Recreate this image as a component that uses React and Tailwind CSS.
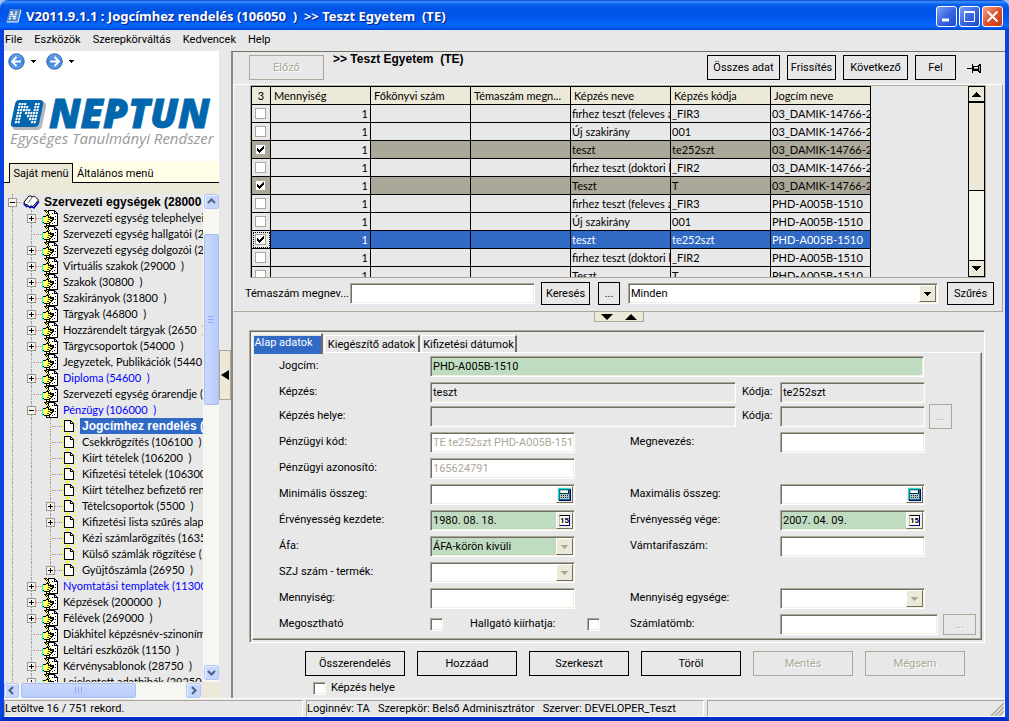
import React from 'react';

const bevel =
  'border border-t-[#aca899] border-l-[#aca899] border-b-white border-r-white shadow-[inset_1px_1px_0_#716f64,inset_-1px_-1px_0_#f1efe2] rounded-none outline-none';

function TextField({ id, label, value = '', tone = 'white', className = '' }) {
  const tones = {
    white: 'bg-white text-black',
    faded: 'bg-white text-[#aca899]',
    green: 'bg-[#c0dcc0] text-black',
    gray: 'bg-[#e8e8e8] text-black',
  };
  return (
    <input
      id={id}
      aria-label={label}
      type="text"
      defaultValue={value}
      className={`h-[21px] min-w-0 px-0.5 ${bevel} ${tones[tone]} ${className}`}
    />
  );
}

function AddonField({ id, value = '', tone, children, buttonLabel }) {
  return (
    <div className="relative h-[21px] w-[145px]">
      <TextField id={id} value={value} tone={tone} className="w-full pr-5" />
      <button
        aria-label={buttonLabel}
        className="absolute top-0.5 right-0.5 flex h-[17px] w-[17px] items-center justify-center border border-t-white border-l-white border-r-[#716f64] border-b-[#716f64] bg-[#f1efe2]"
      >
        {children}
      </button>
    </div>
  );
}

function SelectField({ id, label, value = '', tone = 'white', faded = true, className = '' }) {
  const bg = tone === 'green' ? 'bg-[#c0dcc0]' : 'bg-white';
  return (
    <div className={`relative h-[21px] ${className}`}>
      <select id={id} aria-label={label} defaultValue={value} className={`block h-full w-full appearance-none px-0.5 ${bevel} ${bg}`}>
        <option>{value}</option>
      </select>
      <span className="pointer-events-none absolute top-0.5 right-0.5 flex h-[17px] w-[17px] items-center justify-center border border-t-white border-l-white border-r-[#716f64] border-b-[#716f64] bg-[#ece9d8]">
        <svg width="7" height="4" viewBox="0 0 7 4" shapeRendering="crispEdges">
          <path d="M0 0h7v1H6v1H5v1H4v1H3V3H2V2H1V1H0z" fill={faded ? '#aca899' : '#000'} />
        </svg>
      </span>
    </div>
  );
}

function Calculator() {
  return (
    <svg width="13" height="13" viewBox="0 0 13 13" shapeRendering="crispEdges" className="shrink-0">
      <path d="M1 1h12v12H1z" fill="#000080" />
      <path d="M0 0h12v12H0z" fill="#008080" />
      <path d="M0 0h12v1H1v10H0z" fill="#30d5d5" />
      <path d="M2 2h9v9H2z" fill="#c0c0c0" />
      <path d="M3 3h7v2H3z" fill="#fff" />
      <path d="M2 5h9v1H2zM3 7h1v1H3zM5 7h1v1H5zM7 7h1v1H7zM9 7h1v1H9zM3 9h1v1H3zM5 9h1v1H5zM7 9h1v1H7zM9 9h1v1H9zM10 2h1v3h-1z" fill="#003050" />
    </svg>
  );
}

function CalendarDay() {
  return (
    <span className="flex h-[11px] w-[11px] shrink-0 items-center justify-center border border-t-black border-l-[#c0c0c0] border-r-[#000080] border-b-[#000080] bg-white text-[8px] leading-none font-bold">
      15
    </span>
  );
}

function TickBox({ id, label, checked, size = 'form' }) {
  const skin =
    size === 'grid' ? 'h-[11px] w-[11px] border border-[#aca899] bg-white' : `h-[13px] w-[13px] bg-white ${bevel}`;
  return (
    <span className="relative inline-flex">
      <input id={id} aria-label={label} type="checkbox" defaultChecked={checked} className={`peer appearance-none ${skin}`} />
      <svg
        className="pointer-events-none absolute inset-0 m-auto hidden peer-checked:block"
        width="7"
        height="7"
        viewBox="0 0 7 7"
        shapeRendering="crispEdges"
      >
        <path d="M0 2h1v1h1v1h1V3h1V2h1V1h1V0h1v3H6v1H5v1H4v1H3v1H2V6H1V5H0z" fill="#000" />
      </svg>
    </span>
  );
}

function FlatButton({ children, disabled, className = '' }) {
  return (
    <button
      disabled={disabled}
      className={`shrink-0 border whitespace-nowrap ${
        disabled ? 'border-[#aca899] text-[#aca899] [text-shadow:1px_1px_0_#fff]' : 'border-black text-black'
      } ${className}`}
    >
      {children}
    </button>
  );
}

/* ---------- navigation tree ---------- */

function NoteIcon() {
  return (
    <svg width="16" height="16" viewBox="0 0 16 16" shapeRendering="crispEdges" className="shrink-0">
      <path d="M6 0h7v1h1v1h1v1h1v13H4v-3h2z" fill="#000" />
      <path d="M7 1h5v3h3v11H5v-2h2z" fill="#fff" />
      <path d="M13 2h1v1h-1z" fill="#fff" />
      <path d="M10 3h1v1h-1zM13 6h1v1h-1zM11 7h1v1h-1zM13 9h1v1h-1zM10 13h1v1h-1zM12 12h1v1h-1zM7 14h1v1H7z" fill="#000" />
      <path d="M0 6h1v8H0z" fill="#00ffff" />
      <path d="M1 6h3V5h3v1h2v1h2v1h1v2h-1v1h-1v1H9v1H8v1H2v-1H1z" fill="#000" />
      <path d="M1 7h3V6h2v2h4v2H8v1h1v1H7v1H2v-1H1z" fill="#ffff60" />
      <path d="M6 9h2v1H6zM5 11h2v1H5z" fill="#606000" />
      <path d="M2 0h3v1h1v2h1v1h1v2h1v1h1v2H8V8H7V6H6V5H5V3H4V2H3V1H2z" fill="#000" />
      <path d="M4 1h1v1H4zM5 2h1v2H5zM6 4h1v1H6zM7 5h1v2H7z" fill="#ffff00" />
      <path d="M3 0h1v1H3z" fill="#a00000" />
    </svg>
  );
}

function PageIcon() {
  return (
    <svg width="16" height="16" viewBox="0 0 16 16" shapeRendering="crispEdges" className="shrink-0">
      <path d="M0 1h1v1h1v1h1v1H2V3H1V2H0zM12 2h1v1h-1zM13 1h1v1h-1zM14 0h1v1h-1zM0 7h3v1H0zM14 8h2v1h-2zM0 14h1v1H0zM1 13h1v1H1zM2 12h1v1H2zM14 14h1v1h-1zM13 13h1v1h-1zM5 0h2v1H5zM14 5h1v1h-1zM5 15h4v1H5zM1 4h1v1H1zM1 10h1v1H1z" fill="#ffff00" />
      <path d="M3 2h7v1h1v1h1v1h1v9H3z" fill="#000" />
      <path d="M4 3h5v3h3v7H4z" fill="#fff" />
      <path d="M10 4h1v1h-1z" fill="#fff" />
    </svg>
  );
}

function BookIcon() {
  return (
    <svg width="17" height="14" viewBox="0 0 17 14" className="shrink-0">
      <path d="M0.500 8.500 3.500 11.500q2-1 3.500 1.200 2-1.500 4 .3L16 6.500" stroke="#0000d0" strokeWidth="1.500" fill="none" />
      <path d="M1 7 6 1q2-.5 3.200.8Q10.500 1 12 1.500L15.500 5 10 11.500q-2-1.200-3.500.2L4 9.500q-1 0-1.500.3z" fill="#fff" stroke="#000" />
      <path d="M9.300 2 5.500 7.500" stroke="#606060" fill="none" />
    </svg>
  );
}

function TreeCell({ mark, stub, cut }) {
  return (
    <span className="relative block h-4 w-[19px] shrink-0">
      <span className={`absolute top-0 left-2 border-l border-dotted border-[#9d9a8c] ${cut ? 'h-2' : 'h-4'}`} />
      {stub && <span className="absolute top-2 left-2.5 w-2.5 border-t border-dotted border-[#9d9a8c]" />}
      {mark && (
        <button
          aria-label={mark === '+' ? 'Kinyit' : 'Becsuk'}
          className="absolute top-1 left-1 flex h-[9px] w-[9px] items-center justify-center border border-[#9d9a8c] bg-[#f4f3ee]"
        >
          <svg width="5" height="5" viewBox="0 0 5 5" shapeRendering="crispEdges">
            <path d={mark === '+' ? 'M0 2h2V0h1v2h2v1H3v2H2V3H0z' : 'M0 2h5v1H0z'} fill="#000" />
          </svg>
        </button>
      )}
    </span>
  );
}

const tree = [
  [1, '+', 'Szervezeti egység telephelyei'],
  [1, '', 'Szervezeti egység hallgatói (2'],
  [1, '+', 'Szervezeti egység dolgozói (2'],
  [1, '+', 'Virtuális szakok (29000  )'],
  [1, '+', 'Szakok (30800  )'],
  [1, '+', 'Szakirányok (31800  )'],
  [1, '+', 'Tárgyak (46800  )'],
  [1, '+', 'Hozzárendelt tárgyak (2650  )'],
  [1, '+', 'Tárgycsoportok (54000  )'],
  [1, '', 'Jegyzetek, Publikációk (5440'],
  [1, '+', 'Diploma (54600  )', 'blue'],
  [1, '', 'Szervezeti egység órarendje ('],
  [1, '-', 'Pénzügy (106000  )', 'blue'],
  [2, '', 'Jogcímhez rendelés (', 'selected'],
  [2, '', 'Csekkrögzítés (106100  )'],
  [2, '', 'Kiírt tételek (106200  )'],
  [2, '', 'Kifizetési tételek (106300'],
  [2, '', 'Kiírt tételhez befizető rend'],
  [2, '+', 'Tételcsoportok (5500  )'],
  [2, '+', 'Kifizetési lista szűrés alapj'],
  [2, '', 'Kézi számlarögzítés (1635'],
  [2, '', 'Külső számlák rögzítése ('],
  [2, '+', 'Gyüjtőszámla (26950  )'],
  [1, '+', 'Nyomtatási templatek (113000', 'blue'],
  [1, '+', 'Képzések (200000  )'],
  [1, '+', 'Félévek (269000  )'],
  [1, '', 'Diákhitel képzésnév-szinoním'],
  [1, '', 'Leltári eszközök (1150  )'],
  [1, '+', 'Kérvénysablonok (28750  )'],
  [1, '+', 'Lejelentett adathibák (29250'],
];

function Tree() {
  return (
    <ul className="min-h-0 min-w-0 flex-1 overflow-hidden font-['Lato',sans-serif] leading-4 whitespace-pre">
      <li className="flex h-4 items-center">
        <TreeCell mark="-" stub />
        <BookIcon />
        <span className="ml-1 font-['Liberation_Sans',sans-serif] text-[12px] font-bold">Szervezeti egységek (28000</span>
      </li>
      {tree.map(([level, mark, text, kind]) => (
        <li key={text} className="flex h-4 items-center">
          <TreeCell />
          {level === 2 && <TreeCell />}
          <TreeCell mark={mark} stub cut={level === 2 && text.startsWith('Gyüjtő')} />
          {level === 1 ? <NoteIcon /> : <PageIcon />}
          <a
            href="#tree"
            className={
              kind === 'selected'
                ? "ml-[3px] flex-1 bg-[#316ac5] px-0.5 font-['Liberation_Sans',sans-serif] text-[12px] font-bold text-white"
                : kind === 'blue'
                  ? 'ml-[5px] text-[#0000ff]'
                  : 'ml-[5px]'
            }
          >
            {text}
          </a>
        </li>
      ))}
    </ul>
  );
}

function ScrollArrow({ dir }) {
  const paths = {
    up: 'M1 6l3.500-3.500L8 6',
    down: 'M1 3l3.500 3.500L8 3',
    left: 'M6 1 2.500 4.500 6 8',
    right: 'M3 1l3.500 3.500L3 8',
  };
  return (
    <button
      aria-label={dir}
      className="flex h-[15px] w-[15px] shrink-0 items-center justify-center rounded-xs border border-[#b0c6f4] bg-[#c6d6fc] shadow-[inset_1px_1px_0_#e8effe]"
    >
      <svg width="9" height="9" viewBox="0 0 9 9">
        <path d={paths[dir]} fill="none" stroke="#4d6185" strokeWidth="2" />
      </svg>
    </button>
  );
}

const logoDots = ['11100011', '11110011', '11111011', '11011111', '11001111', '11000111', '11000011'];

function NeptunLogo() {
  return (
    <div className="mt-7 px-1.5">
      <div className="flex items-center">
        <svg width="38" height="32" viewBox="0 0 38 32" className="shrink-0">
          <path d="M11 3h21q5 0 4 5l-4 19q-1 4-5 4H6q-4 0-3-4l4-20q1-4 4-4z" fill="#b4b8bc" />
          <path d="M9 1h21q4 0 3.200 4l-4 19q-1 4-5 4H4q-4 0-3-4L5 5q1-4 4-4z" fill="#0066ad" />
          <g transform="translate(9 4) skewX(-12)" fill="#fff">
            {logoDots.map((line, r) =>
              [...line].map((on, c) =>
                on === '1' ? <rect key={`${r}-${c}`} x={c * 2.7} y={r * 3} width="2" height="2.200" /> : null
              )
            )}
          </g>
        </svg>
        <svg width="164" height="34" viewBox="0 0 164 34" className="shrink-0 overflow-visible">
          <text x="1" y="30" fill="#0066ad" stroke="#0066ad" strokeWidth="0.8" className="font-['Open_Sans',sans-serif] text-[40px] font-extrabold italic">
            NEPTUN
          </text>
        </svg>
      </div>
      <p className="-mt-0.5 font-['Open_Sans',sans-serif] text-[15px] leading-4 whitespace-nowrap text-[#999] italic">
        Egységes Tanulmányi Rendszer
      </p>
    </div>
  );
}

function HistoryButton({ back }) {
  return (
    <button aria-label={back ? 'Vissza' : 'Előre'} className="flex items-center gap-1.5">
      <svg width="17" height="17" viewBox="0 0 17 17">
        <defs>
          <linearGradient id={back ? 'hb' : 'hf'} x1="0" y1="0" x2="0" y2="1">
            <stop offset="0" stopColor="#6fa9ec" />
            <stop offset="0.5" stopColor="#3f80dc" />
            <stop offset="1" stopColor="#5ba5ee" />
          </linearGradient>
        </defs>
        <circle cx="8.500" cy="8.500" r="7.700" fill={`url(#${back ? 'hb' : 'hf'})`} stroke="#2b5fae" />
        <path
          d={back ? 'M8.500 4 4 8.500 8.500 13M4.500 8.500H13' : 'M8.500 4 13 8.500 8.500 13M12.500 8.500H4'}
          stroke="#fff"
          strokeWidth="2"
          fill="none"
        />
      </svg>
      <svg width="5" height="3" viewBox="0 0 5 3" shapeRendering="crispEdges">
        <path d="M0 0h5v1H4v1H3v1H2V2H1V1H0z" />
      </svg>
    </button>
  );
}

function Sidebar() {
  return (
    <aside className="flex min-h-0 w-[215px] shrink-0 flex-col bg-[#e8e8e8]">
      <div className="h-[110px] shrink-0 bg-white">
        <div className="flex gap-2.5 pt-0.5 pl-1">
          <HistoryButton back />
          <HistoryButton />
        </div>
        <NeptunLogo />
      </div>
      <div className="flex h-[22px] shrink-0 items-end border-b border-black bg-[#ffffe8]">
        <button className="-mb-px ml-[5px] h-5 w-16 border border-b-0 border-black bg-[#ece9d8] whitespace-nowrap">
          Saját menü
        </button>
        <button className="px-1 leading-4">Általános menü</button>
      </div>
      <div className="h-[11px] shrink-0 bg-[#ece9d8]" />
      <div className="flex min-h-0 flex-1">
        <Tree />
        <div className="flex w-4 shrink-0 flex-col items-center bg-[#f7f7f2] pb-0.5">
          <ScrollArrow dir="up" />
          <div className="mt-[25px] flex h-[171px] w-[15px] flex-col items-center justify-center rounded-xs border border-[#a7bef2] bg-linear-to-r from-[#cad8fd] to-[#b8cbfa]">
            <span className="my-px h-px w-1.5 bg-[#8cb0f8]" />
            <span className="my-px h-px w-1.5 bg-[#8cb0f8]" />
            <span className="my-px h-px w-1.5 bg-[#8cb0f8]" />
          </div>
          <div className="flex-1" />
          <ScrollArrow dir="down" />
        </div>
      </div>
      <div className="flex h-4 shrink-0 items-center bg-[#ece9d8] pr-[18px]">
        <div className="flex flex-1 items-center bg-[#f7f7f2]">
          <ScrollArrow dir="left" />
          <div className="ml-0.5 flex h-[15px] w-[115px] items-center justify-center gap-0.5 rounded-xs border border-[#a7bef2] bg-linear-to-b from-[#cad8fd] to-[#b8cbfa]">
            <span className="h-1.5 w-px bg-[#8cb0f8]" />
            <span className="h-1.5 w-px bg-[#8cb0f8]" />
            <span className="h-1.5 w-px bg-[#8cb0f8]" />
          </div>
          <div className="flex-1" />
          <ScrollArrow dir="right" />
        </div>
      </div>
    </aside>
  );
}

/* ---------- record grid ---------- */

const rows = [
  [false, 'firhez teszt (feleves a', '_FIR3', '03_DAMIK-14766-25'],
  [false, 'Új szakirány', '001', '03_DAMIK-14766-25'],
  [true, 'teszt', 'te252szt', '03_DAMIK-14766-25'],
  [false, 'firhez teszt (doktori k', '_FIR2', '03_DAMIK-14766-25'],
  [true, 'Teszt', 'T', '03_DAMIK-14766-25'],
  [false, 'firhez teszt (feleves a', '_FIR3', 'PHD-A005B-1510'],
  [false, 'Új szakirány', '001', 'PHD-A005B-1510'],
  [true, 'teszt', 'te252szt', 'PHD-A005B-1510', true],
  [false, 'firhez teszt (doktori k', '_FIR2', 'PHD-A005B-1510'],
  [false, 'Teszt', 'T', 'PHD-A005B-1510'],
];

function RecordGrid() {
  const headers = ['Mennyiség', 'Főkönyvi szám', 'Témaszám megn...', 'Képzés neve', 'Képzés kódja', 'Jogcím neve'];
  const cell = 'h-[18px] overflow-hidden border-r border-b border-black p-0 pl-px whitespace-nowrap';
  return (
    <div className="mx-4 flex h-[193px] border border-[#aca899]">
      <div className="min-w-0 flex-1 overflow-hidden">
        <table className="w-[620px] table-fixed border-separate border-spacing-0 border-t border-l border-black font-['Lato',sans-serif] leading-4">
          <thead>
            <tr className="bg-[#ece9d8] text-left">
              <th className="h-[18px] w-[19px] border-r border-b border-black p-0 text-center font-normal">3</th>
              {headers.map((h) => (
                <th key={h} className="h-[18px] overflow-hidden border-r border-b border-black p-0 pl-[3px] font-normal whitespace-nowrap">
                  {h}
                </th>
              ))}
            </tr>
          </thead>
          <tbody>
            {rows.map(([checked, name, code, title, selected], i) => {
              const tone = selected ? 'bg-[#316ac5] text-white' : checked ? 'bg-[#aca899]' : '';
              return (
                <tr key={i}>
                  <td className={`h-[18px] border-r border-b border-black p-0 ${selected ? 'outline outline-dotted -outline-offset-2' : tone}`}>
                    <span className="flex justify-center pr-px">
                      <TickBox label={`${i + 1}. sor`} checked={checked} size="grid" />
                    </span>
                  </td>
                  <td className={`${cell} pr-0.5 text-right ${selected ? tone : ''}`}>1</td>
                  <td className={`${cell} ${tone}`} />
                  <td className={`${cell} ${tone}`} />
                  <td className={`${cell} ${tone}`}>{name}</td>
                  <td className={`${cell} ${tone}`}>{code}</td>
                  <td className={`${cell} ${tone}`}>{title}</td>
                </tr>
              );
            })}
          </tbody>
        </table>
      </div>
      <div className="flex w-[17px] shrink-0 flex-col border border-black bg-[#f6f4ec]">
        <button aria-label="Fel görgetés" className="flex h-4 shrink-0 items-center justify-center border-b-2 border-black bg-[#ece9d8]">
          <svg width="9" height="5" viewBox="0 0 9 5" shapeRendering="crispEdges">
            <path d="M4 0h1v1h1v1h1v1h1v1h1v1H0V4h1V3h1V2h1V1h1z" />
          </svg>
        </button>
        <div className="h-[88px] border-b border-black bg-[#ece9d8]" />
        <div className="flex-1" />
        <button aria-label="Le görgetés" className="flex h-4 shrink-0 items-center justify-center border-t border-black bg-[#ece9d8]">
          <svg width="9" height="5" viewBox="0 0 9 5" shapeRendering="crispEdges">
            <path d="M0 0h9v1H8v1H7v1H6v1H5v1H4V4H3V3H2V2H1V1H0z" />
          </svg>
        </button>
      </div>
    </div>
  );
}

/* ---------- detail form ---------- */

function Pair({ left, right }) {
  return (
    <div className="grid h-[21px] grid-cols-[151px_200px_150px_1fr] items-center">
      {left}
      {right}
    </div>
  );
}

function FormLabel({ htmlFor, children, className = '' }) {
  return (
    <label htmlFor={htmlFor} className={`pb-0.5 whitespace-nowrap ${className}`}>
      {children}
    </label>
  );
}

function DetailForm() {
  return (
    <div className="flex flex-col gap-[5px] pt-[3px] pb-1 pl-[25px]">
      <div className="grid h-[21px] grid-cols-[151px_494px] items-center">
        <FormLabel htmlFor="jogcim">Jogcím:</FormLabel>
        <TextField id="jogcim" value="PHD-A005B-1510" tone="green" />
      </div>
      <div className="flex flex-col gap-[3px]">
        <div className="grid h-[21px] grid-cols-[151px_306px_44px_145px] items-center">
          <FormLabel htmlFor="kepzes">Képzés:</FormLabel>
          <TextField id="kepzes" value="teszt" tone="gray" />
          <FormLabel htmlFor="kod1" className="pl-1.5">Kódja:</FormLabel>
          <TextField id="kod1" value="te252szt" tone="gray" />
        </div>
        <div className="grid h-[21px] grid-cols-[151px_306px_44px_145px_auto] grid-rows-[21px] items-center justify-start">
          <FormLabel htmlFor="hely">Képzés helye:</FormLabel>
          <TextField id="hely" tone="gray" />
          <FormLabel htmlFor="kod2" className="pl-1.5">Kódja:</FormLabel>
          <TextField id="kod2" tone="gray" />
          <FlatButton disabled className="ml-1 h-[25px] w-[23px]">...</FlatButton>
        </div>
      </div>
      <Pair
        left={<><FormLabel htmlFor="pkod">Pénzügyi kód:</FormLabel><TextField id="pkod" value="TE te252szt PHD-A005B-151" tone="faded" className="w-[145px]" /></>}
        right={<><FormLabel htmlFor="megn">Megnevezés:</FormLabel><TextField id="megn" className="w-[145px]" /></>}
      />
      <Pair left={<><FormLabel htmlFor="pazon">Pénzügyi azonosító:</FormLabel><TextField id="pazon" value="165624791" tone="faded" className="w-[145px]" /></>} />
      <Pair
        left={<><FormLabel htmlFor="min">Minimális összeg:</FormLabel><AddonField id="min" buttonLabel="Számológép"><Calculator /></AddonField></>}
        right={<><FormLabel htmlFor="max">Maximális összeg:</FormLabel><AddonField id="max" buttonLabel="Számológép"><Calculator /></AddonField></>}
      />
      <Pair
        left={<><FormLabel htmlFor="tol">Érvényesség kezdete:</FormLabel><AddonField id="tol" value="1980. 08. 18." tone="green" buttonLabel="Naptár"><CalendarDay /></AddonField></>}
        right={<><FormLabel htmlFor="ig">Érvényesség vége:</FormLabel><AddonField id="ig" value="2007. 04. 09." tone="green" buttonLabel="Naptár"><CalendarDay /></AddonField></>}
      />
      <Pair
        left={<><FormLabel htmlFor="afa">Áfa:</FormLabel><SelectField id="afa" value="ÁFA-körön kivüli" tone="green" className="w-[145px]" /></>}
        right={<><FormLabel htmlFor="vam">Vámtarifaszám:</FormLabel><TextField id="vam" className="w-[145px]" /></>}
      />
      <Pair left={<><FormLabel htmlFor="szj">SZJ szám - termék:</FormLabel><SelectField id="szj" className="w-[145px]" /></>} />
      <Pair
        left={<><FormLabel htmlFor="menny">Mennyiség:</FormLabel><TextField id="menny" className="w-[145px]" /></>}
        right={<><FormLabel htmlFor="egys">Mennyiség egysége:</FormLabel><SelectField id="egys" className="w-[145px]" /></>}
      />
      <Pair
        left={
          <>
            <FormLabel htmlFor="megoszt">Megosztható</FormLabel>
            <div className="flex items-center">
              <TickBox id="megoszt" />
              <FormLabel htmlFor="hallg" className="ml-[27px] w-[117px]">Hallgató kiírhatja:</FormLabel>
              <TickBox id="hallg" />
            </div>
          </>
        }
        right={
          <>
            <FormLabel htmlFor="tomb">Számlatömb:</FormLabel>
            <div className="flex gap-[5px]">
              <TextField id="tomb" className="w-[158px]" />
              <FlatButton disabled className="h-[21px] w-[33px]">...</FlatButton>
            </div>
          </>
        }
      />
    </div>
  );
}

function DetailTabs() {
  const idle =
    'mt-0.5 h-[17px] overflow-hidden border-t border-l border-white border-r-2 border-r-[#716f64] pt-px leading-4 whitespace-nowrap';
  return (
    <div className="mt-2 mr-5 ml-4 border border-t-[#aca899] border-l-[#aca899] border-r-white border-b-white p-0.5 shadow-[inset_1px_1px_0_#716f64]">
      <div className="flex h-[19px] gap-px" role="tablist">
        <div className="z-10 -mb-0.5 border-t border-l border-white border-r-2 border-r-[#716f64] pt-0.5 pl-px">
          <button role="tab" aria-selected="true" className="block h-[18px] w-[67px] bg-[#316ac5] pr-2 pb-1 leading-3 whitespace-nowrap text-white">
            Alap adatok
          </button>
        </div>
        <button role="tab" className={`${idle} w-24`}>Kiegészítő adatok</button>
        <button role="tab" className={`${idle} w-24`}>Kifizetési dátumok</button>
      </div>
      <div className="border border-t-white border-l-white border-r-[#716f64] border-b-[#716f64] pl-px shadow-[inset_-1px_-1px_0_#aca899]">
        <DetailForm />
      </div>
    </div>
  );
}

/* ---------- window chrome ---------- */

function PinIcon() {
  return (
    <svg width="15" height="11" viewBox="0 0 15 11" shapeRendering="crispEdges">
      <path d="M0 5h5v1H0zM5 1h1v9H5zM6 3h1v5H6zM7 3h4v1H7zM7 6h5v2H7zM11 2h1v7h-1zM12 1h1v9h-1zM13 1h1v9h-1z" />
      <path d="M7 4h4v1H7z" fill="#fff" />
      <path d="M7 5h4v1H7zM12 3h1v5h-1z" fill="#a0a0a0" />
    </svg>
  );
}

function WindowButton({ label, close, children }) {
  return (
    <button
      aria-label={label}
      className={`flex h-[21px] w-[21px] items-center justify-center rounded-[3px] border border-white ${
        close ? 'bg-linear-to-br from-[#f0a088] via-[#e0512c] to-[#c63a10]' : 'bg-linear-to-br from-[#7ea2f5] via-[#3a66e0] to-[#1c49cf]'
      }`}
    >
      <svg width="13" height="13" viewBox="0 0 13 13" stroke="#fff" fill="none">
        {children}
      </svg>
    </button>
  );
}

export default function App() {
  return (
    <div className="flex h-screen flex-col bg-[#a8c0f0] font-['Roboto','Liberation_Sans',sans-serif] text-[11px] leading-4 text-black">
      <header className="flex h-[30px] shrink-0 items-center gap-1 rounded-t-lg bg-linear-[to_bottom,#0a3fc8_0%,#3a90ff_6%,#0a62ee_14%,#0054e3_30%,#0058ee_60%,#0668ff_85%,#005cf8_93%,#0040c8_100%] pt-0.5 pr-1.5 pl-1.5">
        <svg width="16" height="14" viewBox="0 0 16 14" className="shrink-0">
          <path d="M4 0h11l-3 13H0z" fill="#4a86c8" />
          <path d="M15 1 12 13H1" fill="none" stroke="#fff" />
          <path d="M3.500 10.500 5.500 2.500M5.500 2.500l3 8 2-8" fill="none" stroke="#fff" strokeWidth="2" strokeDasharray="1.500 0.700" />
        </svg>
        <h1 className="flex-1 font-['Noto_Sans',sans-serif] text-[13px] font-bold whitespace-pre text-white [text-shadow:1px_1px_1px_#0a1e80]">
          {'V2011.9.1.1 : Jogcímhez rendelés (106050  )  >> Teszt Egyetem  (TE)'}
        </h1>
        <div className="flex gap-0.5">
          <WindowButton label="Kis méret"><path d="M2 10h7" strokeWidth="3" /></WindowButton>
          <WindowButton label="Teljes méret"><path d="M1.500 1.500h10v10h-10zM1 2.500h11" /></WindowButton>
          <WindowButton label="Bezárás" close><path d="M1.500 1.500l10 10M11.500 1.500l-10 10" strokeWidth="2" /></WindowButton>
        </div>
      </header>

      <div className="flex min-h-0 flex-1 flex-col border-x-4 border-b-4 border-[#0842e0] border-b-[#0030c8] bg-[#e8e8e8]">
        <nav className="flex h-[21px] shrink-0 items-center gap-3 px-px pb-0.5">
          {['File', 'Eszközök', 'Szerepkörváltás', 'Kedvencek', 'Help'].map((m) => (
            <button key={m}>{m}</button>
          ))}
        </nav>

        <div className="flex min-h-0 flex-1">
          <Sidebar />
          <div className="flex w-3 shrink-0 items-center">
            <button aria-label="Menü elrejtése" className="flex h-[50px] w-3 items-center justify-center border border-[#aca899] bg-[#ece9d8]">
              <svg width="8" height="10" viewBox="0 0 8 10">
                <path d="M8 0v10L0 5z" />
              </svg>
            </button>
          </div>

          <main className="flex min-w-0 flex-1 flex-col border-t border-l-2 border-t-[#716f64] border-l-[#8c8a80]">
            <div className="flex h-8 shrink-0 gap-[7px] pt-[3px] pr-[23px] pl-4">
              <FlatButton disabled className="h-[25px] w-[75px]">Előző</FlatButton>
              <p className="-mt-0.5 flex-1 pl-0.5 font-['Liberation_Sans',sans-serif] text-[12px] leading-3 font-bold whitespace-pre">
                {'>> Teszt Egyetem  (TE)'}
              </p>
              <FlatButton className="h-[25px] w-[73px]">Összes adat</FlatButton>
              <FlatButton className="h-[25px] w-[49px]">Frissítés</FlatButton>
              <FlatButton className="h-[25px] w-[65px]">Következő</FlatButton>
              <FlatButton className="h-[25px] w-[41px]">Fel</FlatButton>
              <button aria-label="Rögzítés" className="mt-2 ml-1 h-[11px]"><PinIcon /></button>
            </div>

            <section className="mr-0.5 shrink-0 border border-t-white border-l-white border-r-[#aca899] border-b-[#aca899]">
              <RecordGrid />
              <div className="flex items-center pt-1 pr-2 pb-1.5 pl-[11px]">
                <label htmlFor="keres" className="w-[105px] shrink-0 whitespace-nowrap">Témaszám megnev...</label>
                <TextField id="keres" className="w-[185px]" />
                <FlatButton className="ml-1.5 h-[23px] w-[49px]">Keresés</FlatButton>
                <FlatButton className="ml-2 h-[23px] w-[22px]">...</FlatButton>
                <SelectField label="Szűrő" value="Minden" faded={false} className="ml-2 flex-1" />
                <FlatButton className="ml-[9px] h-[23px] w-[47px]">Szűrés</FlatButton>
              </div>
            </section>

            <section className="shrink-0">
              <button aria-label="Panelek átméretezése" className="mx-auto flex h-2.5 w-[50px] items-center justify-center border border-t-0 border-[#aca899] bg-[#ece9d8]">
                <svg width="36" height="6" viewBox="0 0 36 6">
                  <path d="M0 0h12L6 6zM24 6h12l-6-6z" />
                </svg>
              </button>
              <DetailTabs />
              <div className="mt-2 flex gap-3 pl-[72px]">
                {['Összerendelés', 'Hozzáad', 'Szerkeszt', 'Töröl'].map((b) => (
                  <FlatButton key={b} className="h-[25px] w-[100px]">{b}</FlatButton>
                ))}
                <FlatButton disabled className="h-[25px] w-[100px]">Mentés</FlatButton>
                <FlatButton disabled className="h-[25px] w-[100px]">Mégsem</FlatButton>
              </div>
              <div className="mt-1 flex items-center gap-[5px] pl-20">
                <TickBox id="kepzeshelye" />
                <label htmlFor="kepzeshelye">Képzés helye</label>
              </div>
            </section>
          </main>
        </div>

        <footer className="flex h-[19px] shrink-0 gap-[3px] border-t border-white pt-px leading-4 whitespace-pre">
          <div className="w-[299px] border border-[#aca899] border-r-white border-b-white">Letöltve 16 / 751 rekord.</div>
          <div className="w-[398px] border border-[#aca899] border-r-white border-b-white">
            {'Loginnév: TA   Szerepkör: Belső Adminisztrátor   Szerver: DEVELOPER_Teszt'}
          </div>
          <div className="flex flex-1 items-end justify-end border border-[#aca899] border-r-white border-b-white">
            <svg width="14" height="14" viewBox="0 0 14 14">
              <path d="M1 14 14 1M5 14l9-9M9 14l5-5" stroke="#aca899" strokeWidth="1.500" />
            </svg>
          </div>
        </footer>
      </div>
    </div>
  );
}
